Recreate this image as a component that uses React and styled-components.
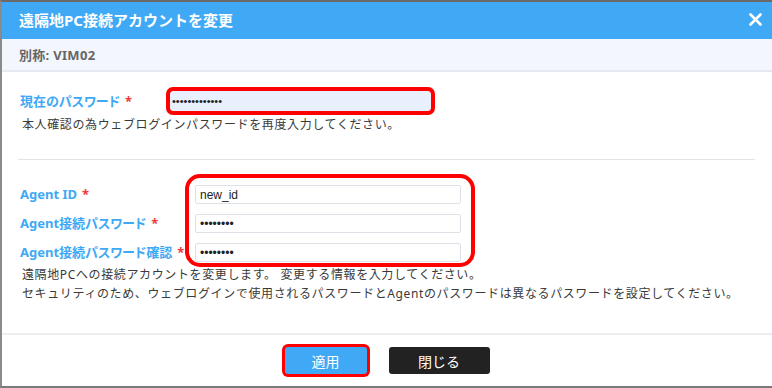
import React from "react";
import styled, { createGlobalStyle } from "styled-components";

const Global = createGlobalStyle`
  html, body { margin: 0; padding: 0; background: #fff; }
  body { font-family: "Noto Sans", "Noto Sans CJK JP", sans-serif; }
  * { box-sizing: border-box; }
`;

const Dialog = styled.div`
  width: 772px;
  height: 388px;
  display: flex;
  flex-direction: column;
  border-top: 2px solid #6a6a6a;
  border-left: 2px solid #8a8a8a;
  border-bottom: 2px solid #7a7a7a;
  background: #fff;
  overflow: hidden;
`;

const Header = styled.div`
  height: 37px;
  flex: none;
  background: #3fa9f5;
  display: flex;
  align-items: center;
  justify-content: space-between;
  padding: 0 10px 0 17px;
`;

const Title = styled.h1`
  margin: 0;
  font-family: "Noto Sans", "Noto Sans CJK JP", sans-serif;
  font-size: 15px;
  font-weight: 700;
  color: #fff;
  line-height: 1;
`;

const CloseButton = styled.button`
  border: 0;
  background: transparent;
  padding: 0;
  width: 13px;
  height: 13px;
  margin-top: -3px;
  display: flex;
  cursor: pointer;
`;

const SubHeader = styled.div`
  height: 33px;
  flex: none;
  background: #f3f6fd;
  border-bottom: 2px solid #e6e9ef;
  display: flex;
  align-items: center;
  padding-left: 17px;
  font-size: 13px;
  font-weight: 700;
  letter-spacing: 0.3px;
  color: #666;
`;

const Body = styled.div`
  flex: 1;
  padding: 19px 17px 0 18px;
  display: flex;
  flex-direction: column;
`;

const Row = styled.div`
  display: flex;
  align-items: center;
`;

const Label = styled.label`
  flex: none;
  width: ${(p) => p.$width}px;
  height: 19px;
  line-height: 19px;
  font-size: 13px;
  font-weight: 700;
  color: #3fa9f5;
  font-feature-settings: "palt";
  white-space: nowrap;
`;

const Star = styled.span`
  color: #f03a3a;
  margin-left: 5px;
`;

const Input = styled.input`
  width: ${(p) => p.$width}px;
  height: ${(p) => p.$height}px;
  padding: 0 ${(p) => p.$pad}px;
  border: 1px solid ${(p) => (p.$autofill ? "#e8f0fe" : "#dde2e8")};
  background: ${(p) => (p.$autofill ? "#e8f0fe" : "#fff")};
  font-family: "Liberation Sans", Arial, sans-serif;
  font-size: ${(p) => p.$font}px;
  color: #222;
  outline: none;
  box-shadow: ${(p) => (p.$mark ? "0 0 0 4px #ff0000" : "none")};
  border-radius: ${(p) => (p.$mark ? "3px" : "2px")};
`;

const Help = styled.p`
  margin: ${(p) => p.$top}px 0 0 2px;
  font-family: "Noto Sans", "Noto Sans CJK JP", sans-serif;
  font-size: 12px;
  line-height: ${(p) => p.$lh}px;
  letter-spacing: 0.62px;
  color: #3a3a3a;
  white-space: nowrap;
`;

const Divider = styled.hr`
  margin: 25px 0 0 -2px;
  border: 0;
  border-top: 1px solid #e4e4e4;
  height: 0;
`;

const AgentBlock = styled.div`
  margin-top: 25px;
  display: flex;
`;

const LabelColumn = styled.div`
  display: flex;
  flex-direction: column;
  gap: 10px;
`;

const InputColumn = styled.div`
  position: relative;
  display: flex;
  flex-direction: column;
  gap: 10px;
  &::after {
    content: "";
    position: absolute;
    top: -11px;
    left: -10px;
    right: -14px;
    bottom: -5px;
    border: 4px solid #ff0000;
    border-radius: 15px;
    pointer-events: none;
  }
`;

const Footer = styled.div`
  height: 53px;
  flex: none;
  border-top: 2px solid #eceef2;
  display: flex;
  justify-content: center;
  align-items: flex-start;
  gap: 22px;
  padding-top: 12px;
`;

const Button = styled.button`
  height: 27px;
  width: ${(p) => p.$width}px;
  border: 0;
  border-radius: 3px;
  background: ${(p) => (p.$primary ? "#3fa9f5" : "#222")};
  color: #fff;
  font-family: "Noto Sans CJK JP", sans-serif;
  font-size: 14px;
  padding: 0;
  cursor: pointer;
  box-shadow: ${(p) => (p.$mark ? "0 0 0 3px #ff0000" : "none")};
`;

export default function App() {
  return (
    <>
      <Global />
      <Dialog>
        <Header>
          <Title>遠隔地PC接続アカウントを変更</Title>
          <CloseButton aria-label="close">
            <svg width="13" height="13" viewBox="0 0 13 13">
              <path d="M1.5 1.5 L11.5 11.5 M11.5 1.5 L1.5 11.5" stroke="#fff" strokeWidth="2.6" strokeLinecap="round" fill="none" />
            </svg>
          </CloseButton>
        </Header>
        <SubHeader>別称: VIM02</SubHeader>
        <Body>
          <Row>
            <Label $width={150}>
              現在のパスワード<Star>*</Star>
            </Label>
            <Input type="password" readOnly value="abcdefghijklm" $width={261} $height={20} $pad={1} $font={11} $autofill $mark />
          </Row>
          <Help $top={5} $lh={18}>本人確認の為ウェブログインパスワードを再度入力してください。</Help>
          <Divider />
          <AgentBlock>
            <LabelColumn>
              <Label $width={175}>Agent ID<Star>*</Star></Label>
              <Label $width={175}>Agent接続パスワード<Star>*</Star></Label>
              <Label $width={175}>Agent接続パスワード確認<Star>*</Star></Label>
            </LabelColumn>
            <InputColumn>
              <Input type="text" readOnly value="new_id" $width={266} $height={19} $pad={4} $font={12} />
              <Input type="password" readOnly value="abcdefgh" $width={266} $height={19} $pad={4} $font={12} />
              <Input type="password" readOnly value="abcdefgh" $width={266} $height={19} $pad={4} $font={12} />
            </InputColumn>
          </AgentBlock>
          <Help $top={3} $lh={19}>
            遠隔地PCへの接続アカウントを変更します。 変更する情報を入力してください。
            <br />
            セキュリティのため、ウェブログインで使用されるパスワードとAgentのパスワードは異なるパスワードを設定してください。
          </Help>
        </Body>
        <Footer>
          <Button $primary $mark $width={82}>適用</Button>
          <Button $width={101}>閉じる</Button>
        </Footer>
      </Dialog>
    </>
  );
}
